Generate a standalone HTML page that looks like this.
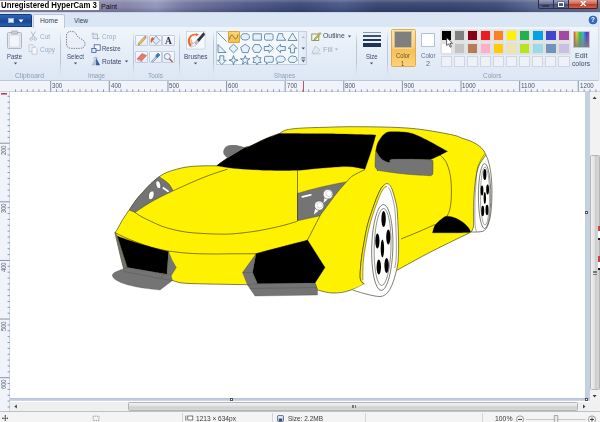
<!DOCTYPE html>
<html><head><meta charset="utf-8"><title>Paint</title>
<style>
*{margin:0;padding:0;box-sizing:border-box}
html,body{width:600px;height:422px;overflow:hidden;background:#fff}
body{font-family:"Liberation Sans",sans-serif;position:relative;font-size:6.6px;color:#1e3050}
.a{position:absolute}
#title{left:0;top:0;width:600px;height:13px;box-sizing:border-box;background:linear-gradient(rgba(255,255,255,0.22),rgba(255,255,255,0.05) 25%,rgba(0,0,20,0) 60%,rgba(0,0,30,0.18)),linear-gradient(90deg,#8c89aa 0%,#8c89aa 16%,#8583a6 21%,#9297ba 26%,#777ba3 30%,#6a6e98 33%,#4f5987 41%,#3c4876 50%,#4a5888 57%,#38456f 63%,#36446f 75%,#3e4c78 83%,#5a6890 89%,#6a7898 100%);border-bottom:1px solid #c9d6ea}
#hc{left:0;top:0.5px;width:98.5px;height:9.7px;background:#fff}
#tabs{left:0;top:13px;width:600px;height:14px;background:#dbe6f4}
#ribbon{left:0;top:27px;width:600px;height:53.6px;background:linear-gradient(#f0f5fb,#e3ecf7 60%,#dde7f4);border-bottom:1px solid #bcc8da}
#hruler{left:0;top:80.6px;width:600px;height:11.2px;background:#f0f3f9}
#vruler{left:0;top:91.8px;width:10px;height:319.2px;background:#f0f3f9}
#work{left:10px;top:91.8px;width:580px;height:309.7px;background:linear-gradient(#c6d0e3,#c6d0e3 305.2px,#b4c0d8 306.2px,#d4dbe9 309.2px)}
#canvas{left:10px;top:91.8px;width:575px;height:306.2px;background:#fff}
#vscroll{left:590px;top:91.8px;width:10px;height:309.7px;background:#f2f2f2}
#hscroll{left:10px;top:401.5px;width:580px;height:9.5px;background:#efefef}
#status{left:0;top:411px;width:600px;height:11px;background:#f4f4f4;border-top:1px solid #bcc0c7}
.t{position:absolute;white-space:nowrap;transform-origin:0 50%}
.g{color:#8fa0b8}
.gl{color:#7d8ea8}
</style></head><body><div id="wrap" style="position:absolute;left:0;top:0;width:600px;height:422px;filter:blur(0.35px)">
<div class="a" id="title"></div>
<div class="a" id="hc"></div>
<div class="a" id="tabs"></div>
<div class="a" id="ribbon"></div>
<div class="a" id="hruler"></div>
<div class="a" id="work"></div>
<div class="a" id="canvas"></div>
<svg class="a" style="left:0;top:0" width="600" height="422" viewBox="0 0 600 422">
<path d="M115.0,232.5C115.4,231.9 116.2,231.2 117.5,229.0C118.8,226.8 121.0,222.2 123.0,219.0C125.0,215.8 127.0,213.2 129.2,210.0C131.4,206.8 133.7,203.1 136.0,200.0C138.3,196.9 140.8,194.4 143.3,191.7C145.8,188.9 148.3,186.0 151.0,183.5C153.7,181.0 156.5,178.6 159.2,176.7C161.9,174.8 164.1,173.6 167.0,172.3C169.9,171.1 173.7,170.0 176.7,169.2C179.7,168.4 182.2,167.8 185.0,167.3C187.8,166.8 190.0,166.6 193.3,166.3C196.6,166.1 201.1,165.9 205.0,165.8C208.9,165.7 214.8,165.8 216.7,165.8L216.7,165.8C218.6,164.4 223.6,160.6 228.3,157.5C233.0,154.4 241.4,149.4 245.0,147.5C248.6,145.6 246.4,147.7 250.0,146.2C253.6,144.7 261.7,140.5 266.7,138.3C271.7,136.2 277.8,134.1 280.0,133.3L280.0,133.2C280.6,132.8 282.1,131.6 283.5,131.0C284.9,130.4 285.6,130.0 288.3,129.5C291.1,129.0 293.9,128.6 300.0,128.2C306.1,127.8 316.7,127.5 325.0,127.3C333.3,127.0 340.6,126.8 350.0,126.7C359.4,126.7 372.2,126.8 381.7,127.0C391.1,127.2 399.5,127.5 406.7,128.0C413.9,128.5 419.4,129.2 425.0,130.0C430.6,130.8 435.0,131.6 440.0,132.5C445.0,133.4 451.2,134.5 455.0,135.5C458.8,136.5 460.3,137.6 462.8,138.5C465.3,139.4 467.6,139.8 470.0,140.8C472.4,141.8 475.1,143.3 477.0,144.5C478.9,145.7 480.2,146.8 481.5,148.0C482.8,149.2 483.8,150.8 484.5,152.0C485.2,153.2 485.8,154.5 486.0,155.0L486.0,155.0C485.3,155.9 483.3,158.5 482.0,160.5C480.7,162.5 479.4,164.2 478.4,167.0C477.4,169.8 476.6,173.7 476.0,177.0C475.4,180.3 475.1,183.2 474.7,187.0C474.3,190.8 474.0,196.2 473.8,200.0C473.6,203.8 473.6,206.4 473.6,209.7C473.6,213.0 473.6,217.1 473.6,220.0C473.6,222.9 473.8,225.0 473.4,227.0C473.0,229.0 471.6,231.2 471.3,232.0L471.3,232.0C464.8,235.2 445.0,244.6 432.5,251.0C420.0,257.4 402.5,267.2 396.5,270.5L396.5,270.5C391.1,272.8 369.4,281.8 364.0,284.0L364.0,284.0C362.5,284.8 358.6,287.1 355.0,288.5C351.4,289.9 346.7,291.6 342.5,292.3C338.3,293.0 334.2,293.2 330.0,292.8C325.8,292.4 319.6,290.5 317.5,290.0L317.5,290.0C317.1,288.8 315.4,284.2 315.0,283.0L315.0,283.0C305.4,283.1 268.9,283.5 257.5,283.8C246.1,284.0 248.3,284.5 246.5,284.6L246.5,284.6C244.6,284.6 238.6,284.6 235.0,284.5C231.4,284.4 228.8,284.4 225.0,284.3C221.2,284.2 216.2,284.2 212.0,284.1C207.8,284.0 204.0,283.9 200.0,283.8C196.0,283.7 191.3,283.6 188.0,283.4C184.7,283.2 182.6,283.2 180.0,282.7C177.4,282.2 173.8,280.9 172.5,280.5L172.5,280.5C171.1,279.5 171.5,276.7 164.0,274.5C156.5,272.3 134.2,268.5 127.5,267.5C120.8,266.5 125.8,274.6 123.8,268.8C121.7,262.9 116.5,238.5 115.0,232.5Z" fill="#fff200" stroke="#2a2a1a" stroke-width="0.6" />
<path d="M364.3,284.0C363.6,283.2 360.9,282.6 360.3,279.0C359.8,275.4 360.4,268.6 361.0,262.5C361.6,256.4 362.9,248.8 364.0,242.6C365.1,236.3 366.0,230.7 367.5,225.0C369.0,219.3 371.2,213.2 372.8,208.5C374.4,203.8 375.6,200.3 377.0,197.0C378.4,193.7 379.8,190.5 381.0,188.5C382.2,186.5 383.0,185.8 384.0,185.0C385.0,184.2 386.0,183.5 387.0,183.6C388.0,183.7 389.1,184.1 390.0,185.3C390.9,186.5 391.9,188.7 392.7,191.0C393.5,193.3 394.3,196.1 395.0,199.0C395.7,201.9 396.5,204.2 397.0,208.5C397.5,212.8 397.7,218.9 398.0,225.0C398.3,231.1 398.6,238.8 398.6,245.0C398.6,251.2 398.4,257.8 398.0,262.0C397.6,266.2 396.8,269.1 396.5,270.5L396.5,270.5C396.0,272.2 394.6,277.9 393.5,281.0C392.4,284.1 391.3,286.8 390.0,289.0C388.7,291.2 387.3,293.2 385.5,294.5C383.7,295.8 382.2,296.6 379.0,296.5C375.8,296.4 370.4,295.1 366.0,294.0C361.6,292.9 354.8,290.7 352.5,290.0L352.5,290.0C354.5,289.0 362.3,285.0 364.3,284.0Z" fill="#fff" stroke="none" stroke-width="0.6" />
<path d="M364.3,284.0C363.6,283.2 360.9,282.6 360.3,279.0C359.8,275.4 360.4,268.6 361.0,262.5C361.6,256.4 362.9,248.8 364.0,242.6C365.1,236.3 366.0,230.7 367.5,225.0C369.0,219.3 371.2,213.2 372.8,208.5C374.4,203.8 375.6,200.3 377.0,197.0C378.4,193.7 379.8,190.5 381.0,188.5C382.2,186.5 383.0,185.8 384.0,185.0C385.0,184.2 386.0,183.5 387.0,183.6C388.0,183.7 389.1,184.1 390.0,185.3C390.9,186.5 391.9,188.7 392.7,191.0C393.5,193.3 394.3,196.1 395.0,199.0C395.7,201.9 396.5,204.2 397.0,208.5C397.5,212.8 397.7,218.9 398.0,225.0C398.3,231.1 398.6,238.8 398.6,245.0C398.6,251.2 398.4,257.8 398.0,262.0C397.6,266.2 396.8,269.1 396.5,270.5" fill="none" stroke="#2a2a1a" stroke-width="0.6" />
<path d="M396.5,270.5C396.0,272.2 394.6,277.9 393.5,281.0C392.4,284.1 391.3,286.8 390.0,289.0C388.7,291.2 387.3,293.2 385.5,294.5C383.7,295.8 382.2,296.6 379.0,296.5C375.8,296.4 370.4,295.1 366.0,294.0C361.6,292.9 354.8,290.7 352.5,290.0" fill="none" stroke="#2a2a1a" stroke-width="0.6" />
<path d="M364.3,284.0C363.6,283.2 360.9,282.6 360.3,279.0C359.8,275.4 360.4,268.6 361.0,262.5C361.6,256.4 362.9,248.8 364.0,242.6C365.1,236.3 366.0,230.7 367.5,225.0C369.0,219.3 371.2,213.2 372.8,208.5C374.4,203.8 375.6,200.3 377.0,197.0C378.4,193.7 379.8,190.5 381.0,188.5C382.2,186.5 383.5,185.6 384.0,185.0L387.0,186.4C386.6,186.6 385.4,186.8 384.6,187.6C383.8,188.4 383.0,189.2 382.0,191.0C381.0,192.8 379.8,195.4 378.6,198.5C377.4,201.6 376.1,204.9 374.6,209.5C373.1,214.1 370.9,220.4 369.5,226.0C368.1,231.6 367.1,236.9 366.0,243.0C364.9,249.1 363.7,256.3 363.2,262.5C362.7,268.7 362.9,277.1 362.8,280.0Z" fill="#fff200" stroke="none" stroke-width="0.6" />
<path d="M364.3,284.0C363.6,283.2 360.9,282.6 360.3,279.0C359.8,275.4 360.4,268.6 361.0,262.5C361.6,256.4 362.9,248.8 364.0,242.6C365.1,236.3 366.0,230.7 367.5,225.0C369.0,219.3 371.2,213.2 372.8,208.5C374.4,203.8 375.6,200.3 377.0,197.0C378.4,193.7 379.8,190.5 381.0,188.5C382.2,186.5 383.5,185.6 384.0,185.0" fill="none" stroke="#2a2a1a" stroke-width="0.6" />
<path d="M362.8,280.0C362.9,277.1 362.7,268.7 363.2,262.5C363.7,256.3 364.9,249.1 366.0,243.0C367.1,236.9 368.1,231.6 369.5,226.0C370.9,220.4 373.1,214.1 374.6,209.5C376.1,204.9 377.4,201.6 378.6,198.5C379.8,195.4 381.0,192.8 382.0,191.0C383.0,189.2 383.8,188.4 384.6,187.6C385.4,186.8 386.6,186.6 387.0,186.4" fill="none" stroke="#2a2a1a" stroke-width="0.5" />
<path d="M388.6,187.5C389.0,188.2 390.1,189.9 390.8,192.0C391.5,194.1 392.3,197.2 393.0,200.0C393.7,202.8 394.3,204.8 394.8,209.0C395.3,213.2 395.5,219.0 395.8,225.0C396.1,231.0 396.4,239.2 396.4,245.0C396.4,250.8 396.3,256.2 396.0,260.0C395.7,263.8 395.0,266.7 394.8,268.0" fill="none" stroke="#2a2a1a" stroke-width="0.45" />
<ellipse cx="382.3" cy="247.5" rx="10.6" ry="43" fill="#fff" stroke="#2a2a1a" stroke-width="0.6" transform="rotate(1.5 382.3 247.5)"/>
<ellipse cx="382.6" cy="247" rx="8.4" ry="38.5" fill="#fff" stroke="#2a2a1a" stroke-width="0.5" transform="rotate(1.5 382.6 247)"/>
<ellipse cx="383.6" cy="219" rx="2.2" ry="8" fill="#000"/>
<ellipse cx="377.4" cy="241" rx="2.1" ry="7.5" fill="#000"/>
<ellipse cx="388.3" cy="237" rx="2.1" ry="7.5" fill="#000"/>
<ellipse cx="382.4" cy="248.5" rx="1.7" ry="9" fill="#000"/>
<ellipse cx="378.8" cy="267" rx="2.2" ry="7.5" fill="#000"/>
<ellipse cx="386.6" cy="265.5" rx="2.2" ry="7.5" fill="#000"/>
<path d="M486.0,155.0C486.3,155.8 487.4,158.0 488.0,160.0C488.6,162.0 489.2,164.2 489.8,167.0C490.4,169.8 491.0,173.7 491.3,177.0C491.6,180.3 491.8,183.2 491.9,187.0C492.0,190.8 491.9,196.2 491.8,200.0C491.7,203.8 491.5,206.7 491.2,209.7C490.9,212.7 490.5,215.5 490.0,218.0C489.5,220.5 488.9,222.7 488.2,224.5C487.5,226.3 486.7,227.9 485.8,229.0C484.9,230.1 484.2,230.8 482.7,231.3C481.2,231.8 478.9,231.9 477.0,232.0C475.1,232.1 472.2,232.0 471.3,232.0" fill="none" stroke="#2a2a1a" stroke-width="0.6" />
<path d="M484.8,153.5C484.1,154.7 481.8,157.8 480.5,160.5C479.2,163.2 477.8,165.6 477.0,170.0C476.2,174.4 476.1,182.0 475.8,187.0C475.5,192.0 475.1,195.8 475.0,200.0C474.9,204.2 474.9,207.7 474.9,212.0C474.9,216.3 474.9,222.8 475.2,226.0C475.5,229.2 476.3,230.6 476.5,231.5" fill="none" stroke="#2a2a1a" stroke-width="0.4" />
<ellipse cx="484.6" cy="196" rx="6.2" ry="32.5" fill="#fff" stroke="#2a2a1a" stroke-width="0.6"/>
<ellipse cx="485" cy="196" rx="4.6" ry="29" fill="#fff" stroke="#2a2a1a" stroke-width="0.4"/>
<ellipse cx="484.8" cy="174.5" rx="1.6" ry="5.5" fill="#000"/>
<ellipse cx="482" cy="190.5" rx="1.4" ry="5" fill="#000"/>
<ellipse cx="487.6" cy="189.5" rx="1.4" ry="5" fill="#000"/>
<ellipse cx="484.8" cy="198" rx="1.2" ry="6" fill="#000"/>
<ellipse cx="482.7" cy="211" rx="1.5" ry="5.2" fill="#000"/>
<ellipse cx="487" cy="210" rx="1.5" ry="5.2" fill="#000"/>
<path d="M216.7,165.8C218.6,164.4 223.6,160.6 228.3,157.5C233.0,154.4 242.2,149.2 245.0,147.5L245.0,147.5C245.8,147.3 246.4,147.7 250.0,146.2C253.6,144.7 261.7,140.4 266.7,138.3C271.7,136.2 277.8,134.2 280.0,133.4L280.0,133.4C288.3,133.5 314.0,133.5 330.0,133.8C346.0,134.1 368.2,134.8 375.8,135.0L375.8,135.0C375.1,137.5 373.3,144.3 371.5,150.0C369.7,155.7 366.1,166.0 365.0,169.2L365.0,169.2C363.6,168.9 359.2,167.9 356.7,167.5C354.2,167.1 352.8,166.8 350.0,166.7C347.2,166.6 345.6,166.5 340.0,166.8C334.4,167.1 323.9,167.9 316.7,168.5C309.5,169.1 305.0,170.0 296.7,170.3C288.4,170.6 274.5,170.3 266.7,170.2C258.9,170.0 255.6,169.7 250.0,169.4C244.4,169.1 238.9,168.9 233.3,168.3C227.8,167.7 219.5,166.2 216.7,165.8Z" fill="#000" stroke="#000" stroke-width="0.3" />
<path d="M245.0,147.5C244.2,147.2 241.5,146.4 240.0,146.0C238.5,145.6 237.6,145.1 235.8,145.0C234.0,144.9 230.9,144.9 229.2,145.2C227.5,145.5 226.5,146.0 225.5,147.0C224.5,148.0 223.5,149.9 223.3,151.2C223.1,152.5 223.6,153.9 224.3,155.0C225.0,156.1 227.0,157.4 227.5,157.9Z" fill="#747474" stroke="none" stroke-width="0.6" />
<path d="M375.8,150.8C376.1,149.6 376.5,145.8 377.5,143.5C378.5,141.2 380.4,138.4 381.7,136.7C383.0,135.0 384.1,134.0 385.5,133.2C386.9,132.4 387.0,132.0 390.0,131.8C393.0,131.6 399.6,131.7 403.3,132.0C407.0,132.3 409.2,132.7 412.0,133.5C414.8,134.3 418.7,136.2 420.0,136.7L420.0,136.7C421.7,137.5 426.7,139.9 430.0,141.7C433.3,143.4 437.1,145.6 440.0,147.2C442.9,148.8 446.2,150.6 447.5,151.3L447.5,151.3C446.2,152.0 442.9,153.8 440.0,155.2C437.1,156.6 431.7,159.0 430.0,159.8L430.0,159.8C423.9,159.7 400.0,158.8 393.3,159.2C386.6,159.6 391.5,162.2 390.0,162.5C388.5,162.8 385.9,161.6 384.2,160.8C382.5,160.0 381.4,159.2 380.0,157.5C378.6,155.8 376.5,151.9 375.8,150.8Z" fill="#000" stroke="#000" stroke-width="0.3" />
<path d="M375.8,150.8C375.7,152.0 375.3,155.3 375.2,158.0C375.1,160.7 375.0,165.2 375.0,166.7L375.0,166.7C375.3,167.2 376.2,168.8 377.0,169.5C377.8,170.2 375.1,170.0 380.0,170.8C384.9,171.6 398.2,173.4 406.7,174.2C415.2,175.0 426.8,175.5 430.8,175.8L430.8,175.8C431.1,175.6 432.2,175.2 432.6,174.5C433.0,173.8 432.9,173.8 433.0,171.7C433.1,169.6 433.1,163.6 433.0,161.7C432.9,159.8 432.8,160.5 432.3,160.2C431.8,159.9 430.4,159.8 430.0,159.7L430.0,159.7C423.9,159.6 400.0,158.7 393.3,159.2C386.6,159.7 391.5,162.2 390.0,162.5C388.5,162.8 385.9,161.6 384.2,160.8C382.5,160.0 381.4,159.2 380.0,157.5C378.6,155.8 376.5,151.9 375.8,150.8Z" fill="#747474" stroke="#444" stroke-width="0.4" />
<path d="M159.2,176.7C157.8,177.8 153.7,181.0 151.0,183.5C148.3,186.0 145.8,188.9 143.3,191.7C140.8,194.4 138.3,196.9 136.0,200.0C133.7,203.1 130.3,208.3 129.2,210.0L129.2,210.0C130.2,210.4 134.0,212.1 135.0,212.5L135.0,212.5C137.8,210.7 145.3,205.3 151.7,201.7C158.1,198.1 169.7,192.6 173.3,190.8L173.3,190.8C172.5,189.6 170.7,185.7 168.3,183.3C166.0,181.0 160.7,177.8 159.2,176.7Z" fill="#747474" stroke="#333" stroke-width="0.4" />
<ellipse cx="158.3" cy="184.7" rx="2.4" ry="4.1" fill="#fff" stroke="#3a3a3a" stroke-width="0.6" transform="rotate(-15 158.3 184.7)"/>
<ellipse cx="151.3" cy="195.3" rx="2.8" ry="4.5" fill="#fff" stroke="#3a3a3a" stroke-width="0.6" transform="rotate(15 151.3 195.3)"/>
<path d="M163.4,188L168,191.2" stroke="#fff" stroke-width="1.8" stroke-linecap="round"/>
<path d="M297.5,193.3C301.5,192.2 313.5,188.8 321.7,186.9C329.9,185.0 342.5,182.6 346.7,181.7L346.7,181.7C345.0,183.6 340.0,189.1 336.7,193.3C333.4,197.5 329.5,202.9 326.7,206.7C323.9,210.4 321.1,214.3 320.0,215.8L320.0,215.8C316.2,216.6 301.2,220.0 297.5,220.8Z" fill="#747474" stroke="#333" stroke-width="0.4" />
<path d="M324.5,197.5L323.5,203L328,199Z" fill="#fff"/>
<path d="M315.3,208.5L313.8,214.5L319,210.5Z" fill="#fff"/>
<circle cx="328" cy="194.2" r="4.9" fill="#fff" stroke="#555" stroke-width="0.6"/>
<circle cx="328.8" cy="193.6" r="3" fill="#fff" stroke="#999" stroke-width="0.4"/>
<circle cx="319.2" cy="205.6" r="4.7" fill="#fff" stroke="#555" stroke-width="0.6"/>
<circle cx="319.8" cy="205.2" r="2.8" fill="#fff" stroke="#999" stroke-width="0.4"/>
<path d="M302.3,196.8L310.8,194.8" stroke="#fff" stroke-width="1.7" stroke-linecap="round"/>
<path d="M173.3,190.8C176.6,189.3 187.2,184.3 193.3,181.7C199.4,179.1 204.3,177.1 210.0,175.0C215.7,172.9 224.6,170.2 227.5,169.2" fill="none" stroke="#2a2a1a" stroke-width="0.6" />
<path d="M297.5,170.5L297.5,220.8" fill="none" stroke="#2a2a1a" stroke-width="0.6" />
<path d="M135.0,212.5C136.2,213.2 139.2,215.5 142.0,217.0C144.8,218.5 148.4,220.1 151.7,221.7C155.0,223.2 158.1,224.9 162.0,226.3C165.9,227.7 170.8,229.0 175.0,230.0C179.2,231.0 182.8,231.6 187.0,232.2C191.2,232.8 195.3,233.0 200.0,233.3C204.7,233.6 210.0,233.9 215.0,234.0C220.0,234.1 224.2,234.3 230.0,234.0C235.8,233.7 243.8,232.8 250.0,232.0C256.2,231.2 262.0,230.1 267.5,229.0C273.0,227.9 278.0,226.8 283.0,225.5C288.0,224.2 295.1,222.0 297.5,221.3" fill="none" stroke="#2a2a1a" stroke-width="0.6" />
<path d="M115.0,232.5C116.7,233.3 121.2,235.8 125.0,237.5C128.8,239.2 133.0,240.8 137.5,242.5C142.0,244.2 147.0,246.1 152.0,247.5C157.0,248.9 164.9,250.4 167.5,251.0" fill="none" stroke="#2a2a1a" stroke-width="0.6" />
<path d="M167.5,251.0C170.4,251.3 179.6,252.5 185.0,253.0C190.4,253.5 195.0,253.6 200.0,253.8C205.0,253.9 210.0,254.0 215.0,254.0C220.0,254.0 223.2,253.8 230.0,253.8C236.8,253.7 251.7,253.8 256.0,253.8" fill="none" stroke="#2a2a1a" stroke-width="0.6" />
<path d="M256.0,253.8C258.0,253.2 264.0,251.5 268.0,250.5C272.0,249.5 275.8,248.6 280.0,247.5C284.2,246.4 288.8,245.1 293.0,244.0C297.2,242.9 302.6,241.7 305.0,241.0C307.4,240.3 307.1,240.2 307.5,240.0" fill="none" stroke="#2a2a1a" stroke-width="0.6" />
<path d="M320,215.8L307.5,240" fill="none" stroke="#2a2a1a" stroke-width="0.6" />
<path d="M346.7,181.7C347.5,180.8 349.8,178.0 351.7,176.5C353.6,175.0 356.1,174.0 358.3,172.8C360.5,171.6 363.9,170.1 365.0,169.5" fill="none" stroke="#2a2a1a" stroke-width="0.6" />
<path d="M440.0,155.0C440.7,155.7 442.8,157.5 444.0,159.0C445.2,160.5 446.1,161.8 447.0,164.0C447.9,166.2 448.9,169.2 449.6,172.0C450.3,174.8 450.7,177.5 451.0,181.0C451.3,184.5 451.4,189.2 451.4,193.0C451.4,196.8 451.2,200.8 450.8,204.0C450.4,207.2 449.7,209.8 449.0,212.0C448.3,214.2 446.9,216.2 446.5,217.0" fill="none" stroke="#2a2a1a" stroke-width="0.6" />
<path d="M401.0,239.0C403.8,237.8 412.3,234.4 418.0,232.0C423.7,229.6 432.2,225.8 435.0,224.5" fill="none" stroke="#2a2a1a" stroke-width="0.6" />
<path d="M115.0,232.5L117.5,236.0L127.5,267.5L123.8,268.8Z" fill="#747474" stroke="#444" stroke-width="0.3" />
<path d="M117.5,236C124,239 152,248 168.5,251.5L167,274.3L127.5,267.5Z" fill="#000" stroke="#000" stroke-width="0.3" />
<path d="M168.5,251.5L172,260L176.3,267.5L171.5,275.2L167,274.3Z" fill="#747474" stroke="#444" stroke-width="0.3" />
<path d="M123.8,268.8C124.4,268.5 126.9,267.7 127.5,267.5L127.5,267.5C133.5,268.5 156.5,272.5 163.8,273.8C171.0,275.0 169.8,274.8 171.0,275.0L171.0,275.0C171.2,275.9 172.2,279.6 172.5,280.5L172.5,280.5C170.4,282.1 162.1,288.4 160.0,290.0L160.0,290.0C156.7,289.6 145.8,288.5 140.0,287.5C134.2,286.5 129.0,285.2 125.0,284.0C121.0,282.8 118.1,281.3 116.0,280.0C113.9,278.7 112.8,277.2 112.5,276.0C112.2,274.8 112.6,273.7 114.5,272.5C116.4,271.3 122.2,269.4 123.8,268.8Z" fill="#747474" stroke="#444" stroke-width="0.3" />
<path d="M123.5,271.5L160.5,278.5L172.5,280.5" fill="none" stroke="#444" stroke-width="0.3" />
<path d="M160.5,278.5L163.75,273.75" fill="none" stroke="#444" stroke-width="0.3" />
<path d="M256,253.75C268,250.5 293,244 305,241L307.5,240L325,267.5L315,283L257.5,283.75L252.5,272.5Z" fill="#000" stroke="#000" stroke-width="0.3" />
<path d="M256,253.75L242.5,272.5L247.5,285L257.5,283.75L252.5,272.5Z" fill="#747474" stroke="#444" stroke-width="0.3" />
<path d="M242.5,272.5L252.5,272.5" fill="none" stroke="#444" stroke-width="0.3" />
<path d="M247.5,285L255,296L317.5,295L317.5,290L315,283L257.5,283.75Z" fill="#747474" stroke="#444" stroke-width="0.3" />
<path d="M249.5,288.5L316.5,287.5" fill="none" stroke="#444" stroke-width="0.3" />
<path d="M432.5,232.8C432.8,231.9 433.4,229.0 434.0,227.5C434.6,226.0 434.8,225.3 436.0,224.0C437.2,222.7 439.3,220.8 441.0,219.5C442.7,218.2 444.2,216.8 446.0,216.3C447.8,215.9 449.6,216.4 451.5,216.8C453.4,217.2 455.7,218.1 457.5,219.0C459.3,219.9 461.1,221.0 462.5,222.0C463.9,223.0 464.9,223.9 466.0,225.0C467.1,226.1 468.2,227.4 469.0,228.5C469.8,229.6 470.2,231.0 470.5,231.5L470.5,231.5C470.0,231.7 470.9,232.4 467.5,232.6C464.1,232.8 455.8,232.8 450.0,232.8C444.2,232.8 435.4,232.8 432.5,232.8Z" fill="#000" stroke="#000" stroke-width="0.3" />
</svg>
<div class="a" id="vruler"></div>
<div class="a" id="vscroll"></div>
<div class="a" id="hscroll"></div>
<div class="a" id="status"></div>
<span class="t " style="left:101.0px;top:1.5px;font-size:7.40px;line-height:9px;color:#0c0c18;transform:scaleX(0.949)">Paint</span>
<div class="a" style="left:0.0px;top:14.0px;width:32.0px;height:13.0px;background:linear-gradient(#2f66b8,#1c4a9a 50%,#17428e 51%,#2a62b4);border-radius:0 2px 0 0;border:1px solid #143a7a;border-left:none"></div>
<div class="a" style="left:7.5px;top:17.5px;width:6.5px;height:5.5px;background:#e8eef8;border:0.6px solid #9bb0d6"></div>
<svg class="a" style="left:18px;top:19px" width="6" height="4"><path d="M0.5,0.5L5.5,0.5L3,3.5Z" fill="#fff"/></svg>
<div class="a" style="left:33.0px;top:14.0px;width:31.5px;height:14.0px;background:#f3f7fc;border:1px solid #b9c8dc;border-bottom:none;border-radius:2px 2px 0 0"></div>
<span class="t " style="left:39.6px;top:16.1px;font-size:7.00px;line-height:9px;color:#2f3f5c;transform:scaleX(0.959)">Home</span>
<span class="t " style="left:74.0px;top:16.1px;font-size:7.00px;line-height:9px;color:#2f3f5c;transform:scaleX(0.931)">View</span>
<svg class="a" style="left:588px;top:14.8px" width="10" height="10"><circle cx="5" cy="5" r="4" fill="#2f6fc4" stroke="#1c4f96" stroke-width="0.6"/><text x="5" y="7.4" font-size="6.5" font-weight="bold" fill="#fff" text-anchor="middle" font-family="Liberation Sans,sans-serif">?</text></svg>
<div class="a" style="left:537.5px;top:0.0px;width:16.0px;height:8.8px;background:linear-gradient(#9a9fbc,#6d7499 45%,#454f78 50%,#56608a);border:0.8px solid #2a3050;border-top:none;border-radius:0 0 0 2.5px"></div>
<div class="a" style="left:553.5px;top:0.0px;width:15.0px;height:8.8px;background:linear-gradient(#9a9fbc,#6d7499 45%,#454f78 50%,#56608a);border:0.8px solid #2a3050;border-top:none;border-left:none"></div>
<div class="a" style="left:568.5px;top:0.0px;width:29.5px;height:8.8px;background:linear-gradient(#e0a090,#cc6a58 45%,#b83a24 50%,#cf5e44);border:0.8px solid #4a2020;border-top:none;border-left:none;border-radius:0 0 2.5px 0"></div>
<div class="a" style="left:542.3px;top:4.6px;width:6.5px;height:2.2px;background:#fff;border:0.5px solid #3a3a4a"></div>
<div class="a" style="left:558.0px;top:2.2px;width:5.5px;height:4.6px;background:none;border:1.2px solid #fff;box-shadow:0 0 0 0.4px #3a3a4a"></div>
<span class="t " style="left:580.0px;top:-2.0px;font-size:8.50px;line-height:10px;color:#fff;font-weight:bold;transform:scaleX(1.375)">x</span>
<span class="t " style="left:1.2px;top:-0.4px;font-size:9.30px;line-height:11px;color:#000;font-weight:bold;transform:scaleX(0.840)">Unregistered HyperCam 3</span>
<div class="a" style="left:60.0px;top:30.0px;width:1.0px;height:46.0px;background:linear-gradient(rgba(170,185,205,0),#b9c6d8 30%,#b9c6d8 70%,rgba(170,185,205,0))"></div>
<div class="a" style="left:132.5px;top:30.0px;width:1.0px;height:46.0px;background:linear-gradient(rgba(170,185,205,0),#b9c6d8 30%,#b9c6d8 70%,rgba(170,185,205,0))"></div>
<div class="a" style="left:179.0px;top:30.0px;width:1.0px;height:46.0px;background:linear-gradient(rgba(170,185,205,0),#b9c6d8 30%,#b9c6d8 70%,rgba(170,185,205,0))"></div>
<div class="a" style="left:212.5px;top:30.0px;width:1.0px;height:46.0px;background:linear-gradient(rgba(170,185,205,0),#b9c6d8 30%,#b9c6d8 70%,rgba(170,185,205,0))"></div>
<div class="a" style="left:356.3px;top:30.0px;width:1.0px;height:46.0px;background:linear-gradient(rgba(170,185,205,0),#b9c6d8 30%,#b9c6d8 70%,rgba(170,185,205,0))"></div>
<div class="a" style="left:387.3px;top:30.0px;width:1.0px;height:46.0px;background:linear-gradient(rgba(170,185,205,0),#b9c6d8 30%,#b9c6d8 70%,rgba(170,185,205,0))"></div>
<svg class="a" style="left:6px;top:30px" width="18" height="20" viewBox="0 0 18 20"><rect x="1.5" y="2.5" width="14" height="16" rx="1" fill="#e3e8ef" stroke="#adb7c6" stroke-width="1"/><rect x="3.5" y="5" width="10" height="12" fill="#f2f5f9" stroke="#c0c8d4" stroke-width="0.5"/><rect x="5.5" y="1" width="6" height="3" rx="0.8" fill="#c9d0db" stroke="#909cae" stroke-width="0.6"/></svg>
<span class="t " style="left:7.0px;top:51.5px;font-size:7.00px;line-height:9px;color:#3a4a66;transform:scaleX(0.838)">Paste</span>
<svg class="a" style="left:12.5px;top:62px" width="5" height="3"><path d="M0.8,0.4L4.2,0.4L2.5,2.4Z" fill="#44546e"/></svg>
<svg class="a" style="left:29px;top:31px" width="9" height="10" viewBox="0 0 9 10"><path d="M2,0.5L6,7M6.5,0.5L2.5,7" stroke="#a9b4c4" stroke-width="0.9" fill="none"/><circle cx="2.2" cy="8" r="1.3" fill="none" stroke="#a9b4c4" stroke-width="0.8"/><circle cx="6.3" cy="8" r="1.3" fill="none" stroke="#a9b4c4" stroke-width="0.8"/></svg>
<span class="t " style="left:40.0px;top:31.5px;font-size:7.00px;line-height:9px;color:#9dabc0;transform:scaleX(0.918)">Cut</span>
<svg class="a" style="left:28px;top:44px" width="10" height="11" viewBox="0 0 10 11"><path d="M1,0.8H5L6.5,2.3V7.5H1Z" fill="#eef2f7" stroke="#b3bdcb" stroke-width="0.7"/><path d="M4,3.3H7.5L9,4.8V10.2H4Z" fill="#f4f6fa" stroke="#b3bdcb" stroke-width="0.7"/></svg>
<span class="t " style="left:40.0px;top:44.7px;font-size:7.00px;line-height:9px;color:#9dabc0;transform:scaleX(0.918)">Copy</span>
<span class="t " style="left:15.0px;top:70.5px;font-size:7.00px;line-height:9px;color:#8c9cb4;transform:scaleX(0.968)">Clipboard</span>
<svg class="a" style="left:65px;top:30px" width="22" height="20" viewBox="0 0 22 20"><path d="M2.6,2.6C5,0.6 9.6,0.8 11.2,4C12.2,6.4 13.4,7.6 15.6,8.6C18.4,9.8 20.4,12 20,14.6C19.6,17.2 17.4,18.4 14.6,18.4L6.4,18.4C3,18.4 1.4,16.4 1.5,13.4L1.5,6C1.5,4.5 1.8,3.4 2.6,2.6Z" fill="#e9eef6" fill-opacity="0.5" stroke="#5a6a84" stroke-width="0.8" stroke-dasharray="1.4 1"/></svg>
<span class="t " style="left:67.0px;top:51.5px;font-size:7.00px;line-height:9px;color:#3a4a66;transform:scaleX(0.874)">Select</span>
<svg class="a" style="left:73px;top:62px" width="5" height="3"><path d="M0.8,0.4L4.2,0.4L2.5,2.4Z" fill="#44546e"/></svg>
<svg class="a" style="left:91px;top:31.5px" width="9" height="9" viewBox="0 0 9 9"><path d="M2,0.5V6.5H8.5M0.5,2H6.5V8.5" fill="none" stroke="#aab5c6" stroke-width="0.9"/><path d="M2.5,6L6.5,2" stroke="#b9c3d2" stroke-width="0.6"/></svg>
<span class="t " style="left:101.5px;top:31.5px;font-size:7.00px;line-height:9px;color:#9dabc0;transform:scaleX(0.923)">Crop</span>
<svg class="a" style="left:90.5px;top:43.5px" width="10" height="10" viewBox="0 0 10 10"><rect x="3.2" y="0.8" width="6" height="5.5" fill="#f4f8fd" stroke="#3d5f95" stroke-width="0.8"/><rect x="0.8" y="4.5" width="4.2" height="4" fill="#dfe9f6" stroke="#3d5f95" stroke-width="0.8"/></svg>
<span class="t " style="left:101.5px;top:44.2px;font-size:7.00px;line-height:9px;color:#3a4a66;transform:scaleX(0.865)">Resize</span>
<svg class="a" style="left:90.5px;top:56px" width="10" height="10" viewBox="0 0 10 10"><path d="M4,3.5V9H1.2Z" fill="#c9d6e8" stroke="#8a9cb8" stroke-width="0.5"/><path d="M5.2,2.4V9H8.6Z" fill="#2e5da8" stroke="#24508f" stroke-width="0.5"/><path d="M2.2,2.6C3,1.2 5.3,1 6.6,2" fill="none" stroke="#5a76a2" stroke-width="0.5"/></svg>
<span class="t " style="left:101.5px;top:57.0px;font-size:7.00px;line-height:9px;color:#3a4a66;transform:scaleX(0.946)">Rotate</span>
<svg class="a" style="left:123.5px;top:60.3px" width="5" height="3"><path d="M0.8,0.4L4.2,0.4L2.5,2.4Z" fill="#44546e"/></svg>
<span class="t " style="left:88.0px;top:70.5px;font-size:7.00px;line-height:9px;color:#8c9cb4;transform:scaleX(0.874)">Image</span>
<div class="a" style="left:135.3px;top:34.7px;width:13.0px;height:11.1px;background:linear-gradient(#f6f9fd,#e6edf7);border:0.7px solid #c3cfdf;border-radius:1px"></div>
<div class="a" style="left:148.6px;top:34.7px;width:13.0px;height:11.1px;background:linear-gradient(#f6f9fd,#e6edf7);border:0.7px solid #c3cfdf;border-radius:1px"></div>
<div class="a" style="left:161.8px;top:34.7px;width:13.0px;height:11.1px;background:linear-gradient(#f6f9fd,#e6edf7);border:0.7px solid #c3cfdf;border-radius:1px"></div>
<div class="a" style="left:135.3px;top:51.3px;width:13.0px;height:11.7px;background:linear-gradient(#f6f9fd,#e6edf7);border:0.7px solid #c3cfdf;border-radius:1px"></div>
<div class="a" style="left:148.6px;top:51.3px;width:13.0px;height:11.7px;background:linear-gradient(#f6f9fd,#e6edf7);border:0.7px solid #c3cfdf;border-radius:1px"></div>
<div class="a" style="left:161.8px;top:51.3px;width:13.0px;height:11.7px;background:linear-gradient(#f6f9fd,#e6edf7);border:0.7px solid #c3cfdf;border-radius:1px"></div>
<svg class="a" style="left:135px;top:34px" width="41" height="30" viewBox="0 0 41 30">
<path d="M3.5,9.2L9.3,2.8L10.8,4.2L5,10.5L3,11.2Z" fill="#f0c050" stroke="#8a6a30" stroke-width="0.5"/><path d="M9.3,2.8L10.2,1.8L11.7,3.2L10.8,4.2Z" fill="#e07060"/>
<path d="M17.5,6.5L21,1.8L25,6.5L21,10.5Z" fill="#dfeaf6" stroke="#5578a8" stroke-width="0.6"/><path d="M17.8,3C15.5,4 15,7 16.2,9.5C17,7.5 18,6 19.5,5Z" fill="#e0603a"/>
<text x="33.4" y="10.2" font-size="9.5" font-weight="bold" fill="#1e2c48" text-anchor="middle" font-family="Liberation Serif,serif">A</text>
<path d="M2.5,24.5L7,19.5L11.5,21.5L7,26.5Z" fill="#e87870" stroke="#b04a48" stroke-width="0.5"/><path d="M2.5,24.5L7,26.5L7,27.8L2.5,25.8Z" fill="#f4c8c4" stroke="#b04a48" stroke-width="0.4"/>
<path d="M16.5,27.5L21,22.5L22.3,23.8L17.8,28Z" fill="#c8d8ea" stroke="#4a6a98" stroke-width="0.5"/><path d="M20.5,22L23,19L25,21L22.3,23.8Z" fill="#3a78c0" stroke="#285a98" stroke-width="0.5"/>
<circle cx="32.3" cy="22.5" r="3" fill="#eef4fb" stroke="#6f7f98" stroke-width="0.8"/><path d="M34.5,24.8L37.5,28" stroke="#b0584a" stroke-width="1.3"/>
</svg>
<span class="t " style="left:148.0px;top:70.5px;font-size:7.00px;line-height:9px;color:#8c9cb4;transform:scaleX(0.918)">Tools</span>
<svg class="a" style="left:186px;top:31px" width="20" height="19" viewBox="0 0 20 19">
<rect x="0.4" y="0.4" width="18.6" height="17.6" fill="#f7f9fc" stroke="#c3cddb" stroke-width="0.7"/>
<path d="M4.5,16C1.5,13.5 1,9 3,6C4.8,3.3 8,2.2 10.5,3L9.8,1.8L13,3.8L9.6,5.6L10,4.4C8,4 5.8,5 4.6,7C3.4,9.2 3.8,12 5.6,13.6Z" fill="#ea6a32"/>
<path d="M5.5,13.4C4,11.5 4,9 5,7.2C6,9 6.3,11 7.6,12.4Z" fill="#f6b48c"/>
<path d="M4.8,16.2C6.2,15.8 8.6,15.6 10.4,13.4L8.8,11.6C6.6,12.6 5.6,14.4 4.8,16.2Z" fill="#eef1f6" stroke="#8a97ac" stroke-width="0.4"/>
<path d="M8.8,11.6L10.4,13.4L13,10.6L11.2,8.8Z" fill="#b9c3d2" stroke="#6f7c92" stroke-width="0.4"/>
<path d="M11.2,8.8L13,10.6L18.9,3.4L17.6,1.6Z" fill="#2c3240" stroke="#1c212c" stroke-width="0.4"/>
</svg>
<span class="t " style="left:183.5px;top:51.5px;font-size:7.00px;line-height:9px;color:#3a4a66;transform:scaleX(0.915)">Brushes</span>
<svg class="a" style="left:193px;top:62px" width="5" height="3"><path d="M0.8,0.4L4.2,0.4L2.5,2.4Z" fill="#44546e"/></svg>
<div class="a" style="left:216.3px;top:30.8px;width:83.0px;height:34.5px;background:#f4f8fd;border:0.7px solid #c5d1e1"></div>
<div class="a" style="left:299.3px;top:30.8px;width:7.7px;height:34.5px;background:linear-gradient(90deg,#e9eff8,#dfe8f4);border:0.7px solid #c5d1e1;border-left:none"></div>
<div class="a" style="left:228.3px;top:30.8px;width:11.8px;height:11.8px;background:linear-gradient(#f9d47c,#f5c046);border:0.7px solid #d9a53a;border-radius:1px"></div>
<svg class="a" style="left:216.3px;top:30.8px" width="84" height="35" viewBox="0 0 84 35">
<path d="M1.5,1.5L10.5,10.5" stroke="#3f6f92" stroke-width="0.75" fill="#e6f1fa" stroke-linejoin="round"/>
<path d="M13.5,8.5C14.5,3 16.5,3 17.7,6C19,9 21,8.5 22,3.5" stroke="#7a5a18" stroke-width="0.8" fill="none"/>
<ellipse cx="29.2" cy="5.8" rx="4.3" ry="3.2" stroke="#3f6f92" stroke-width="0.75" fill="#e6f1fa" stroke-linejoin="round"/>
<rect x="37" y="2.8" width="8.4" height="6.4" stroke="#3f6f92" stroke-width="0.75" fill="#e6f1fa" stroke-linejoin="round"/>
<rect x="48.5" y="2.8" width="8.6" height="6.4" rx="1.6" stroke="#3f6f92" stroke-width="0.75" fill="#e6f1fa" stroke-linejoin="round"/>
<path d="M60.5,9.3L62.5,2.6L66.5,2.6L67,5.5L69.8,9.3Z" stroke="#3f6f92" stroke-width="0.75" fill="#e6f1fa" stroke-linejoin="round"/>
<path d="M76.5,2L81,9.5L72,9.5Z" stroke="#3f6f92" stroke-width="0.75" fill="#e6f1fa" stroke-linejoin="round"/>
<path d="M2,13.5L2,21.5L10,21.5Z" stroke="#3f6f92" stroke-width="0.75" fill="#e6f1fa" stroke-linejoin="round"/>
<path d="M17.5,13.2L22,17.5L17.5,21.8L13,17.5Z" stroke="#3f6f92" stroke-width="0.75" fill="#e6f1fa" stroke-linejoin="round"/>
<path d="M29.2,13.2L33.7,16.4L32,21.6L26.4,21.6L24.7,16.4Z" stroke="#3f6f92" stroke-width="0.75" fill="#e6f1fa" stroke-linejoin="round"/>
<path d="M38.3,13.6L43.5,13.6L45.8,17.5L43.5,21.4L38.3,21.4L36.2,17.5Z" stroke="#3f6f92" stroke-width="0.75" fill="#e6f1fa" stroke-linejoin="round"/>
<path d="M48.3,15.5L53,15.5L53,13.3L57.4,17.5L53,21.7L53,19.5L48.3,19.5Z" stroke="#3f6f92" stroke-width="0.75" fill="#e6f1fa" stroke-linejoin="round"/>
<path d="M69.3,15.5L64.6,15.5L64.6,13.3L60.2,17.5L64.6,21.7L64.6,19.5L69.3,19.5Z" stroke="#3f6f92" stroke-width="0.75" fill="#e6f1fa" stroke-linejoin="round"/>
<path d="M74.5,21.8L74.5,17.3L72.2,17.3L76.5,13L80.8,17.3L78.5,17.3L78.5,21.8Z" stroke="#3f6f92" stroke-width="0.75" fill="#e6f1fa" stroke-linejoin="round"/>
<path d="M3.8,24.8L3.8,29.3L1.5,29.3L5.8,33.6L10.1,29.3L7.8,29.3L7.8,24.8Z" stroke="#3f6f92" stroke-width="0.75" fill="#e6f1fa" stroke-linejoin="round"/>
<path d="M17.5,24.6L18.6,28.1L22,29.2L18.6,30.3L17.5,33.8L16.4,30.3L13,29.2L16.4,28.1Z" stroke="#3f6f92" stroke-width="0.75" fill="#e6f1fa" stroke-linejoin="round"/>
<path d="M29.2,24.5L30.4,27.8L33.9,27.8L31.1,29.9L32.1,33.3L29.2,31.3L26.3,33.3L27.3,29.9L24.5,27.8L28,27.8Z" stroke="#3f6f92" stroke-width="0.75" fill="#e6f1fa" stroke-linejoin="round"/>
<path d="M41,24.3L42.4,26.7L45.1,26.7L43.8,29.1L45.1,31.5L42.4,31.5L41,33.9L39.6,31.5L36.9,31.5L38.2,29.1L36.9,26.7L39.6,26.7Z" stroke="#3f6f92" stroke-width="0.75" fill="#e6f1fa" stroke-linejoin="round"/>
<path d="M49.8,25.3L56,25.3Q57.3,25.3 57.3,26.6L57.3,30Q57.3,31.3 56,31.3L52.5,31.3L50.5,33.3L50.8,31.3L49.8,31.3Q48.5,31.3 48.5,30L48.5,26.6Q48.5,25.3 49.8,25.3Z" stroke="#3f6f92" stroke-width="0.75" fill="#e6f1fa" stroke-linejoin="round"/>
<path d="M64.5,25C67.3,25 69.3,26.4 69.3,28.2C69.3,30 67.3,31.4 64.5,31.4C63.8,31.4 63.3,31.3 62.7,31.2L60.8,33L61.3,30.6C60.5,30 60,29.2 60,28.2C60,26.4 61.8,25 64.5,25Z" stroke="#3f6f92" stroke-width="0.75" fill="#e6f1fa" stroke-linejoin="round"/>
<path d="M74,26C75,24.6 77,24.6 78,25.6C79.6,25 81,26 80.6,27.5C81.6,28.5 81,30.3 79.6,30.5C79,31.8 77,32 76,31.2C74.6,32 73,31.3 73,30C71.8,29.3 72,27.6 73,27.2C72.8,26.5 73.3,26 74,26Z" stroke="#3f6f92" stroke-width="0.75" fill="#e6f1fa" stroke-linejoin="round"/>
</svg>
<svg class="a" style="left:300px;top:31px" width="7" height="34" viewBox="0 0 7 34"><path d="M1.6,7L5,7L3.3,5Z" fill="#aeb9c9"/><path d="M1.6,16.5L5,16.5L3.3,18.6Z" fill="#3c4a64"/><path d="M1.3,26.6H5.3M1.3,28H5.3" stroke="#3c4a64" stroke-width="0.6"/><path d="M1.6,29.3L5,29.3L3.3,31.2Z" fill="#3c4a64"/></svg>
<span class="t " style="left:274.0px;top:70.5px;font-size:7.00px;line-height:9px;color:#8c9cb4;transform:scaleX(0.885)">Shapes</span>
<svg class="a" style="left:311px;top:30.5px" width="11" height="11" viewBox="0 0 11 11"><rect x="0.8" y="3" width="7" height="6.5" fill="#f4f8e8" stroke="#6a8a3a" stroke-width="0.8"/><path d="M3.5,7.5L9,1.5L10,2.5L4.7,8.3L3.2,8.8Z" fill="#f0c050" stroke="#6a5a30" stroke-width="0.5"/></svg>
<span class="t " style="left:323.3px;top:31.3px;font-size:7.00px;line-height:9px;color:#3a4a66;transform:scaleX(0.978)">Outline</span>
<svg class="a" style="left:346.8px;top:34.5px" width="5" height="3"><path d="M0.8,0.4L4.2,0.4L2.5,2.4Z" fill="#44546e"/></svg>
<svg class="a" style="left:311px;top:43.5px" width="11" height="11" viewBox="0 0 11 11"><path d="M1,8.5L4.5,2L9,6L6,9.5Z" fill="#e3e8ef" stroke="#b3bdcb" stroke-width="0.7"/><path d="M0.8,9.8H9.8" stroke="#c3ccd8" stroke-width="1"/></svg>
<span class="t " style="left:323.3px;top:44.5px;font-size:7.00px;line-height:9px;color:#9dabc0;transform:scaleX(1.085)">Fill</span>
<svg class="a" style="left:333.6px;top:47.8px" width="5" height="3"><path d="M0.8,0.4L4.2,0.4L2.5,2.4Z" fill="#aab5c6"/></svg>
<div class="a" style="left:362.8px;top:31.5px;width:18.5px;height:1.0px;background:#8c9bb2"></div>
<div class="a" style="left:362.8px;top:35.0px;width:18.5px;height:1.6px;background:#3c4f70"></div>
<div class="a" style="left:362.8px;top:38.6px;width:18.5px;height:2.3px;background:#22385c"></div>
<div class="a" style="left:362.8px;top:43.3px;width:18.5px;height:4.0px;background:#1d3358"></div>
<span class="t " style="left:366.0px;top:51.5px;font-size:7.00px;line-height:9px;color:#3a4a66;transform:scaleX(0.845)">Size</span>
<svg class="a" style="left:369px;top:62px" width="5" height="3"><path d="M0.8,0.4L4.2,0.4L2.5,2.4Z" fill="#44546e"/></svg>
<div class="a" style="left:390.8px;top:29.2px;width:25.0px;height:38.3px;background:linear-gradient(#fbe3ad,#f9cf77 45%,#f7c155 55%,#fad27c);border:0.8px solid #e2ab48;border-radius:1.5px"></div>
<div class="a" style="left:394.4px;top:31.2px;width:17.5px;height:17.3px;background:#7f7f7f;border:1px solid #cdb98a;box-shadow:0 0 0 0.5px #f5e6bd"></div>
<span class="t " style="left:396.0px;top:51.3px;font-size:7.00px;line-height:9px;color:#6a5320;transform:scaleX(0.837)">Color</span>
<span class="t " style="left:401.3px;top:59.2px;font-size:7.00px;line-height:9px;color:#6a5320;transform:scaleX(0.848)">1</span>
<div class="a" style="left:421.3px;top:33.3px;width:13.8px;height:13.5px;background:#fff;border:0.8px solid #b5c2d4"></div>
<span class="t " style="left:420.5px;top:51.3px;font-size:7.00px;line-height:9px;color:#5f6f8a;transform:scaleX(0.867)">Color</span>
<span class="t " style="left:425.8px;top:59.2px;font-size:7.00px;line-height:9px;color:#5f6f8a;transform:scaleX(1.028)">2</span>
<div class="a" style="left:440.6px;top:30.2px;width:11.5px;height:10.9px;background:#000000;border:0.6px solid #e4e0d4;box-shadow:0 0 0 0.4px #cfd3da"></div>
<div class="a" style="left:453.7px;top:30.2px;width:11.5px;height:10.9px;background:#7f7f7f;border:0.6px solid #e4e0d4;box-shadow:0 0 0 0.4px #cfd3da"></div>
<div class="a" style="left:466.7px;top:30.2px;width:11.5px;height:10.9px;background:#880015;border:0.6px solid #e4e0d4;box-shadow:0 0 0 0.4px #cfd3da"></div>
<div class="a" style="left:479.8px;top:30.2px;width:11.5px;height:10.9px;background:#ed1c24;border:0.6px solid #e4e0d4;box-shadow:0 0 0 0.4px #cfd3da"></div>
<div class="a" style="left:492.8px;top:30.2px;width:11.5px;height:10.9px;background:#ff7f27;border:0.6px solid #e4e0d4;box-shadow:0 0 0 0.4px #cfd3da"></div>
<div class="a" style="left:505.9px;top:30.2px;width:11.5px;height:10.9px;background:#fff200;border:0.6px solid #e4e0d4;box-shadow:0 0 0 0.4px #cfd3da"></div>
<div class="a" style="left:518.9px;top:30.2px;width:11.5px;height:10.9px;background:#22b14c;border:0.6px solid #e4e0d4;box-shadow:0 0 0 0.4px #cfd3da"></div>
<div class="a" style="left:532.0px;top:30.2px;width:11.5px;height:10.9px;background:#00a2e8;border:0.6px solid #e4e0d4;box-shadow:0 0 0 0.4px #cfd3da"></div>
<div class="a" style="left:545.0px;top:30.2px;width:11.5px;height:10.9px;background:#3f48cc;border:0.6px solid #e4e0d4;box-shadow:0 0 0 0.4px #cfd3da"></div>
<div class="a" style="left:558.1px;top:30.2px;width:11.5px;height:10.9px;background:#a349a4;border:0.6px solid #e4e0d4;box-shadow:0 0 0 0.4px #cfd3da"></div>
<div class="a" style="left:440.6px;top:43.2px;width:11.5px;height:11.1px;background:#ffffff;border:0.6px solid #e4e0d4;box-shadow:0 0 0 0.4px #cfd3da"></div>
<div class="a" style="left:453.7px;top:43.2px;width:11.5px;height:11.1px;background:#c3c3c3;border:0.6px solid #e4e0d4;box-shadow:0 0 0 0.4px #cfd3da"></div>
<div class="a" style="left:466.7px;top:43.2px;width:11.5px;height:11.1px;background:#b97a57;border:0.6px solid #e4e0d4;box-shadow:0 0 0 0.4px #cfd3da"></div>
<div class="a" style="left:479.8px;top:43.2px;width:11.5px;height:11.1px;background:#ffaec9;border:0.6px solid #e4e0d4;box-shadow:0 0 0 0.4px #cfd3da"></div>
<div class="a" style="left:492.8px;top:43.2px;width:11.5px;height:11.1px;background:#ffc90e;border:0.6px solid #e4e0d4;box-shadow:0 0 0 0.4px #cfd3da"></div>
<div class="a" style="left:505.9px;top:43.2px;width:11.5px;height:11.1px;background:#efe4b0;border:0.6px solid #e4e0d4;box-shadow:0 0 0 0.4px #cfd3da"></div>
<div class="a" style="left:518.9px;top:43.2px;width:11.5px;height:11.1px;background:#b5e61d;border:0.6px solid #e4e0d4;box-shadow:0 0 0 0.4px #cfd3da"></div>
<div class="a" style="left:532.0px;top:43.2px;width:11.5px;height:11.1px;background:#99d9ea;border:0.6px solid #e4e0d4;box-shadow:0 0 0 0.4px #cfd3da"></div>
<div class="a" style="left:545.0px;top:43.2px;width:11.5px;height:11.1px;background:#7092be;border:0.6px solid #e4e0d4;box-shadow:0 0 0 0.4px #cfd3da"></div>
<div class="a" style="left:558.1px;top:43.2px;width:11.5px;height:11.1px;background:#c8bfe7;border:0.6px solid #e4e0d4;box-shadow:0 0 0 0.4px #cfd3da"></div>
<div class="a" style="left:440.7px;top:55.8px;width:11.4px;height:11.2px;background:#eef2f8;border:0.9px solid #cfd6e0"></div>
<div class="a" style="left:453.8px;top:55.8px;width:11.4px;height:11.2px;background:#eef2f8;border:0.9px solid #cfd6e0"></div>
<div class="a" style="left:466.8px;top:55.8px;width:11.4px;height:11.2px;background:#eef2f8;border:0.9px solid #cfd6e0"></div>
<div class="a" style="left:479.8px;top:55.8px;width:11.4px;height:11.2px;background:#eef2f8;border:0.9px solid #cfd6e0"></div>
<div class="a" style="left:492.9px;top:55.8px;width:11.4px;height:11.2px;background:#eef2f8;border:0.9px solid #cfd6e0"></div>
<div class="a" style="left:505.9px;top:55.8px;width:11.4px;height:11.2px;background:#eef2f8;border:0.9px solid #cfd6e0"></div>
<div class="a" style="left:519.0px;top:55.8px;width:11.4px;height:11.2px;background:#eef2f8;border:0.9px solid #cfd6e0"></div>
<div class="a" style="left:532.1px;top:55.8px;width:11.4px;height:11.2px;background:#eef2f8;border:0.9px solid #cfd6e0"></div>
<div class="a" style="left:545.1px;top:55.8px;width:11.4px;height:11.2px;background:#eef2f8;border:0.9px solid #cfd6e0"></div>
<div class="a" style="left:558.2px;top:55.8px;width:11.4px;height:11.2px;background:#eef2f8;border:0.9px solid #cfd6e0"></div>
<span class="t " style="left:482.5px;top:70.5px;font-size:7.00px;line-height:9px;color:#8c9cb4;transform:scaleX(0.915)">Colors</span>
<svg class="a" style="left:446px;top:36.5px" width="8" height="11" viewBox="0 0 8 11"><path d="M0.6,0.6L0.6,8.6L2.6,6.9L4.1,10.2L5.4,9.6L3.9,6.4L6.5,6.2Z" fill="#fff" stroke="#000" stroke-width="0.6"/></svg>
<svg class="a" style="left:572.5px;top:31.3px" width="17" height="17" viewBox="0 0 17 17"><defs><linearGradient id="rb" x1="0" x2="1" y1="0" y2="0"><stop offset="0" stop-color="#e03030"/><stop offset="0.2" stop-color="#e8e030"/><stop offset="0.4" stop-color="#30c040"/><stop offset="0.6" stop-color="#30c0e0"/><stop offset="0.8" stop-color="#3040d0"/><stop offset="1" stop-color="#c030c0"/></linearGradient><linearGradient id="gb" x1="0" x2="0" y1="0" y2="1"><stop offset="0" stop-color="#808080" stop-opacity="0"/><stop offset="1" stop-color="#808080" stop-opacity="0.9"/></linearGradient></defs><rect x="0.5" y="0.5" width="16" height="16" fill="url(#rb)"/><rect x="0.5" y="0.5" width="16" height="16" fill="url(#gb)" stroke="#c8ccd4" stroke-width="0.8"/></svg>
<span class="t " style="left:574.5px;top:51.3px;font-size:7.00px;line-height:9px;color:#3a4a66;transform:scaleX(1.036)">Edit</span>
<span class="t " style="left:572.0px;top:59.0px;font-size:7.00px;line-height:9px;color:#3a4a66;transform:scaleX(0.964)">colors</span>
<div class="a" style="left:597.6px;top:13.0px;width:2.4px;height:68.0px;background:linear-gradient(90deg,#cfdbeb,#eef3f9)"></div>
<svg class="a" style="left:0;top:80.8px" width="600" height="11" viewBox="0 0 600 11"><g stroke="#5f6b80" stroke-width="0.7" fill="none"><path d="M15.53,8.4V11" /><path d="M21.39,8.4V11" /><path d="M27.25,8.4V11" /><path d="M33.11,8.4V11" /><path d="M38.98,8.4V11" /><path d="M44.84,8.4V11" /><path d="M50.70,0.0V11" /><path d="M56.56,8.4V11" /><path d="M62.42,8.4V11" /><path d="M68.29,8.4V11" /><path d="M74.15,8.4V11" /><path d="M80.01,8.4V11" /><path d="M85.87,8.4V11" /><path d="M91.73,8.4V11" /><path d="M97.60,8.4V11" /><path d="M103.46,8.4V11" /><path d="M109.32,0.0V11" /><path d="M115.18,8.4V11" /><path d="M121.04,8.4V11" /><path d="M126.91,8.4V11" /><path d="M132.77,8.4V11" /><path d="M138.63,8.4V11" /><path d="M144.49,8.4V11" /><path d="M150.35,8.4V11" /><path d="M156.22,8.4V11" /><path d="M162.08,8.4V11" /><path d="M167.94,0.0V11" /><path d="M173.80,8.4V11" /><path d="M179.66,8.4V11" /><path d="M185.53,8.4V11" /><path d="M191.39,8.4V11" /><path d="M197.25,8.4V11" /><path d="M203.11,8.4V11" /><path d="M208.97,8.4V11" /><path d="M214.84,8.4V11" /><path d="M220.70,8.4V11" /><path d="M226.56,0.0V11" /><path d="M232.42,8.4V11" /><path d="M238.28,8.4V11" /><path d="M244.15,8.4V11" /><path d="M250.01,8.4V11" /><path d="M255.87,8.4V11" /><path d="M261.73,8.4V11" /><path d="M267.59,8.4V11" /><path d="M273.46,8.4V11" /><path d="M279.32,8.4V11" /><path d="M285.18,0.0V11" /><path d="M291.04,8.4V11" /><path d="M296.90,8.4V11" /><path d="M302.77,8.4V11" /><path d="M308.63,8.4V11" /><path d="M314.49,8.4V11" /><path d="M320.35,8.4V11" /><path d="M326.21,8.4V11" /><path d="M332.08,8.4V11" /><path d="M337.94,8.4V11" /><path d="M343.80,0.0V11" /><path d="M349.66,8.4V11" /><path d="M355.52,8.4V11" /><path d="M361.39,8.4V11" /><path d="M367.25,8.4V11" /><path d="M373.11,8.4V11" /><path d="M378.97,8.4V11" /><path d="M384.83,8.4V11" /><path d="M390.70,8.4V11" /><path d="M396.56,8.4V11" /><path d="M402.42,0.0V11" /><path d="M408.28,8.4V11" /><path d="M414.14,8.4V11" /><path d="M420.01,8.4V11" /><path d="M425.87,8.4V11" /><path d="M431.73,8.4V11" /><path d="M437.59,8.4V11" /><path d="M443.45,8.4V11" /><path d="M449.32,8.4V11" /><path d="M455.18,8.4V11" /><path d="M461.04,0.0V11" /><path d="M466.90,8.4V11" /><path d="M472.76,8.4V11" /><path d="M478.63,8.4V11" /><path d="M484.49,8.4V11" /><path d="M490.35,8.4V11" /><path d="M496.21,8.4V11" /><path d="M502.07,8.4V11" /><path d="M507.94,8.4V11" /><path d="M513.80,8.4V11" /><path d="M519.66,0.0V11" /><path d="M525.52,8.4V11" /><path d="M531.38,8.4V11" /><path d="M537.25,8.4V11" /><path d="M543.11,8.4V11" /><path d="M548.97,8.4V11" /><path d="M554.83,8.4V11" /><path d="M560.69,8.4V11" /><path d="M566.56,8.4V11" /><path d="M572.42,8.4V11" /><path d="M578.28,0.0V11" /><path d="M584.14,8.4V11" /><path d="M590.00,8.4V11" /><path d="M595.87,8.4V11" /></g><path d="M0,10.7H600" stroke="#aab4c4" stroke-width="0.6"/></svg>
<span class="t " style="left:52.0px;top:81.7px;font-size:6.80px;line-height:8px;color:#4a5568;transform:scaleX(0.899)">300</span>
<span class="t " style="left:110.6px;top:81.7px;font-size:6.80px;line-height:8px;color:#4a5568;transform:scaleX(0.899)">400</span>
<span class="t " style="left:169.2px;top:81.7px;font-size:6.80px;line-height:8px;color:#4a5568;transform:scaleX(0.899)">500</span>
<span class="t " style="left:227.9px;top:81.7px;font-size:6.80px;line-height:8px;color:#4a5568;transform:scaleX(0.899)">600</span>
<span class="t " style="left:286.5px;top:81.7px;font-size:6.80px;line-height:8px;color:#4a5568;transform:scaleX(0.899)">700</span>
<span class="t " style="left:345.1px;top:81.7px;font-size:6.80px;line-height:8px;color:#4a5568;transform:scaleX(0.899)">800</span>
<span class="t " style="left:403.7px;top:81.7px;font-size:6.80px;line-height:8px;color:#4a5568;transform:scaleX(0.899)">900</span>
<span class="t " style="left:462.3px;top:81.7px;font-size:6.80px;line-height:8px;color:#4a5568;transform:scaleX(0.912)">1000</span>
<span class="t " style="left:521.0px;top:81.7px;font-size:6.80px;line-height:8px;color:#4a5568;transform:scaleX(0.944)">1100</span>
<span class="t " style="left:579.6px;top:81.7px;font-size:6.80px;line-height:8px;color:#4a5568;transform:scaleX(0.912)">1200</span>
<div class="a" style="left:303.0px;top:80.8px;width:0.8px;height:11.0px;background:#c8506a"></div>
<svg class="a" style="left:0;top:91px" width="10" height="320" viewBox="0 0 10 320"><g stroke="#5f6b80" stroke-width="0.7" fill="none"><path d="M7.6,5.30H10" /><path d="M7.6,11.17H10" /><path d="M7.6,17.03H10" /><path d="M7.6,22.89H10" /><path d="M7.6,28.75H10" /><path d="M7.6,34.61H10" /><path d="M7.6,40.48H10" /><path d="M7.6,46.34H10" /><path d="M0.0,52.20H10" /><path d="M7.6,58.06H10" /><path d="M7.6,63.92H10" /><path d="M7.6,69.79H10" /><path d="M7.6,75.65H10" /><path d="M7.6,81.51H10" /><path d="M7.6,87.37H10" /><path d="M7.6,93.23H10" /><path d="M7.6,99.10H10" /><path d="M7.6,104.96H10" /><path d="M0.0,110.82H10" /><path d="M7.6,116.68H10" /><path d="M7.6,122.54H10" /><path d="M7.6,128.41H10" /><path d="M7.6,134.27H10" /><path d="M7.6,140.13H10" /><path d="M7.6,145.99H10" /><path d="M7.6,151.85H10" /><path d="M7.6,157.72H10" /><path d="M7.6,163.58H10" /><path d="M0.0,169.44H10" /><path d="M7.6,175.30H10" /><path d="M7.6,181.16H10" /><path d="M7.6,187.03H10" /><path d="M7.6,192.89H10" /><path d="M7.6,198.75H10" /><path d="M7.6,204.61H10" /><path d="M7.6,210.47H10" /><path d="M7.6,216.34H10" /><path d="M7.6,222.20H10" /><path d="M0.0,228.06H10" /><path d="M7.6,233.92H10" /><path d="M7.6,239.78H10" /><path d="M7.6,245.65H10" /><path d="M7.6,251.51H10" /><path d="M7.6,257.37H10" /><path d="M7.6,263.23H10" /><path d="M7.6,269.09H10" /><path d="M7.6,274.96H10" /><path d="M7.6,280.82H10" /><path d="M0.0,286.68H10" /><path d="M7.6,292.54H10" /><path d="M7.6,298.40H10" /><path d="M7.6,304.27H10" /><path d="M7.6,310.13H10" /><path d="M7.6,315.99H10" /></g><path d="M9.7,0V320" stroke="#aab4c4" stroke-width="0.6"/></svg>
<span class="t" style="left:0.2px;top:154.8px;font-size:6.6px;line-height:7px;color:#4a5568;transform-origin:0 0;transform:rotate(-90deg) scaleX(0.86)">200</span>
<span class="t" style="left:0.2px;top:213.4px;font-size:6.6px;line-height:7px;color:#4a5568;transform-origin:0 0;transform:rotate(-90deg) scaleX(0.86)">300</span>
<span class="t" style="left:0.2px;top:272.0px;font-size:6.6px;line-height:7px;color:#4a5568;transform-origin:0 0;transform:rotate(-90deg) scaleX(0.86)">400</span>
<span class="t" style="left:0.2px;top:330.7px;font-size:6.6px;line-height:7px;color:#4a5568;transform-origin:0 0;transform:rotate(-90deg) scaleX(0.86)">500</span>
<span class="t" style="left:0.2px;top:389.3px;font-size:6.6px;line-height:7px;color:#4a5568;transform-origin:0 0;transform:rotate(-90deg) scaleX(0.86)">600</span>
<div class="a" style="left:1.0px;top:92.6px;width:5.6px;height:0.8px;background:#a84058"></div>
<div class="a" style="left:2.2px;top:92.6px;width:0.7px;height:2.8px;background:#c05068"></div>
<div class="a" style="left:4.8px;top:92.6px;width:0.7px;height:2.8px;background:#c05068"></div>
<div class="a" style="left:1.0px;top:94.3px;width:5.6px;height:0.6px;background:#d08a98"></div>
<svg class="a" style="left:590px;top:93.5px" width="9" height="8"><path d="M2.6,5L4.6,2.6L6.6,5Z" fill="#3a3f48"/></svg>
<div class="a" style="left:590.3px;top:155.0px;width:9.7px;height:235.0px;background:linear-gradient(90deg,#f0f0f0,#e0e0e0 45%,#cdcdcd 55%,#d6d6d6);border:0.7px solid #b4b4b4;border-radius:1.5px"></div>
<div class="a" style="left:593.4px;top:270.6px;width:3.6px;height:0.7px;background:#777"></div>
<div class="a" style="left:593.4px;top:272.1px;width:3.6px;height:0.7px;background:#777"></div>
<div class="a" style="left:593.4px;top:273.6px;width:3.6px;height:0.7px;background:#777"></div>
<svg class="a" style="left:590px;top:392px" width="9" height="8"><path d="M2.6,3L4.6,5.4L6.6,3Z" fill="#3a3f48"/></svg>
<svg class="a" style="left:12px;top:402px" width="8" height="9"><path d="M4.8,2.6L2.4,4.6L4.8,6.6Z" fill="#3a3f48"/></svg>
<div class="a" style="left:128.0px;top:401.8px;width:450.0px;height:9.0px;background:linear-gradient(#f2f2f2,#e2e2e2 45%,#cfcfcf 55%,#d8d8d8);border:0.7px solid #b4b4b4;border-radius:1.5px"></div>
<div class="a" style="left:351.5px;top:404.5px;width:0.7px;height:3.4px;background:#777"></div>
<div class="a" style="left:353.0px;top:404.5px;width:0.7px;height:3.4px;background:#777"></div>
<div class="a" style="left:354.5px;top:404.5px;width:0.7px;height:3.4px;background:#777"></div>
<svg class="a" style="left:580px;top:402px" width="8" height="9"><path d="M3,2.6L5.4,4.6L3,6.6Z" fill="#3a3f48"/></svg>
<div class="a" style="left:589.0px;top:401.0px;width:11.0px;height:10.0px;background:#f0f0f0"></div>
<div class="a" style="left:585.2px;top:211.0px;width:3.0px;height:3.0px;background:#fff;border:0.7px solid #555"></div>
<div class="a" style="left:585.2px;top:397.6px;width:3.0px;height:3.0px;background:#fff;border:0.7px solid #555"></div>
<div class="a" style="left:229.5px;top:397.6px;width:3.0px;height:3.0px;background:#fff;border:0.7px solid #555"></div>
<div class="a" style="left:597.5px;top:226.0px;width:2.5px;height:5.0px;background:#d04040"></div>
<div class="a" style="left:597.5px;top:231.0px;width:2.5px;height:7.0px;background:#fff"></div>
<div class="a" style="left:597.5px;top:238.0px;width:2.5px;height:2.0px;background:#222"></div>
<div class="a" style="left:597.5px;top:256.0px;width:2.5px;height:6.0px;background:#d04040"></div>
<div class="a" style="left:597.5px;top:262.0px;width:2.5px;height:6.0px;background:#fff"></div>
<div class="a" style="left:597.5px;top:268.0px;width:2.5px;height:2.0px;background:#222"></div>
<div class="a" style="left:182.0px;top:412.5px;width:0.8px;height:9.5px;background:#d0d3d8"></div>
<div class="a" style="left:272.0px;top:412.5px;width:0.8px;height:9.5px;background:#d0d3d8"></div>
<div class="a" style="left:365.0px;top:412.5px;width:0.8px;height:9.5px;background:#d0d3d8"></div>
<div class="a" style="left:482.0px;top:412.5px;width:0.8px;height:9.5px;background:#d0d3d8"></div>
<svg class="a" style="left:1.5px;top:414.5px" width="6.6" height="6.6" viewBox="0 0 9 9"><path d="M4.5,0.5V8.5M0.5,4.5H8.5" stroke="#333" stroke-width="0.9"/><path d="M4.5,0L3.3,1.6H5.7ZM4.5,9L3.3,7.4H5.7ZM0,4.5L1.6,3.3V5.7ZM9,4.5L7.4,3.3V5.7Z" fill="#333"/></svg>
<svg class="a" style="left:92px;top:415px" width="8" height="7" viewBox="0 0 8 7"><rect x="1.2" y="1.2" width="5.8" height="4.4" fill="none" stroke="#666" stroke-width="0.6" stroke-dasharray="1.2 0.8"/></svg>
<svg class="a" style="left:185px;top:415px" width="9" height="7" viewBox="0 0 9 7"><rect x="2.8" y="1" width="5" height="4" fill="#fff" stroke="#444" stroke-width="0.7"/><path d="M0.8,0.6V5.8" stroke="#444" stroke-width="0.7"/></svg>
<span class="t " style="left:196.0px;top:415.3px;font-size:6.60px;line-height:8px;color:#3a3a3a;transform:scaleX(0.995)">1213 × 634px</span>
<svg class="a" style="left:276.5px;top:415px" width="7" height="7" viewBox="0 0 7 7"><rect x="0.6" y="0.6" width="5.8" height="5.8" rx="0.6" fill="#e8edf5" stroke="#3d4f70" stroke-width="0.8"/><rect x="1.8" y="3.5" width="3.4" height="2.6" fill="#3d4f70"/></svg>
<span class="t " style="left:287.5px;top:415.3px;font-size:6.60px;line-height:8px;color:#3a3a3a;transform:scaleX(0.984)">Size: 2.2MB</span>
<span class="t " style="left:494.5px;top:415.3px;font-size:6.60px;line-height:8px;color:#3a3a3a;transform:scaleX(1.037)">100%</span>
<svg class="a" style="left:515px;top:413.5px" width="85" height="10" viewBox="0 0 85 10"><circle cx="5" cy="5.5" r="3.6" fill="#f4f4f4" stroke="#777" stroke-width="0.7"/><path d="M3,5.5H7" stroke="#333" stroke-width="0.9"/><path d="M11,5.5H71" stroke="#b5b5b5" stroke-width="0.7"/><path d="M41,3.5V7.5" stroke="#999" stroke-width="0.5"/><path d="M39.3,1.5H42.8V7.5L41,9.2L39.3,7.5Z" fill="#e9e9e9" stroke="#777" stroke-width="0.6"/><circle cx="77" cy="5.5" r="3.6" fill="#f4f4f4" stroke="#777" stroke-width="0.7"/><path d="M75,5.5H79M77,3.5V7.5" stroke="#333" stroke-width="0.9"/></svg>
</div></body></html>
